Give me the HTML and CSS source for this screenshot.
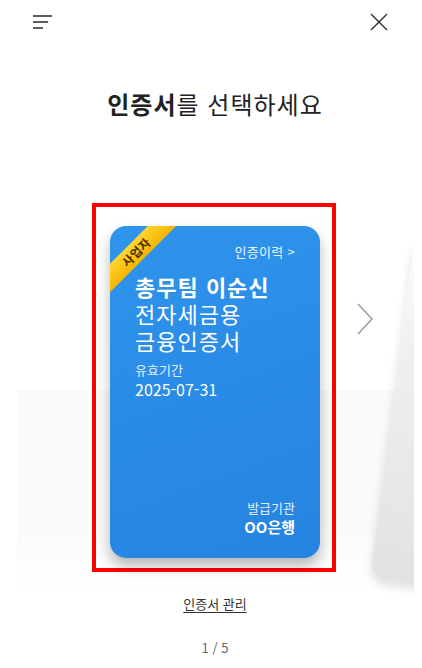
FILE: index.html
```html
<!DOCTYPE html>
<html lang="ko">
<head>
    <meta charset="UTF-8">
    <meta name="viewport" content="width=device-width, initial-scale=1.0">
    <title>인증서 선택</title>
    <link rel="stylesheet" href="styles.css">
</head>
<body>
    <div class="page">
        <header class="topbar">
            <button class="icon-btn" aria-label="메뉴">
                <svg width="22" height="16" viewBox="0 0 22 16" fill="none" stroke="#333" stroke-width="1.6">
                    <line x1="1" y1="2" x2="20" y2="2"></line>
                    <line x1="1" y1="8" x2="16" y2="8"></line>
                    <line x1="1" y1="14" x2="11" y2="14"></line>
                </svg>
            </button>
            <button class="icon-btn" aria-label="닫기">
                <svg width="18" height="18" viewBox="0 0 18 18" fill="none" stroke="#333" stroke-width="1.5">
                    <line x1="1" y1="1" x2="17" y2="17"></line>
                    <line x1="17" y1="1" x2="1" y2="17"></line>
                </svg>
            </button>
        </header>

        <h1 class="title"><strong>인증서</strong>를 선택하세요</h1>

        <section class="stage">
            <div class="stage-bg"></div>
            <div class="next-card"></div>

            <div class="slide">
                <div class="frame">
                    <div class="cert">
                        <div class="ribbon">사업자</div>
                        <div class="cert-top">
                            <a class="history">인증이력 &gt;</a>
                        </div>
                        <div class="cert-name">
                            <strong>총무팀 이순신</strong>
                            <span>전자세금용</span>
                            <span>금융인증서</span>
                        </div>
                        <div class="cert-date">
                            <span class="label">유효기간</span>
                            <span class="value">2025-07-31</span>
                        </div>
                        <div class="cert-issuer">
                            <span class="label">발급기관</span>
                            <span class="value">OO은행</span>
                        </div>
                    </div>
                </div>
                <button class="next-btn" aria-label="다음">
                    <svg width="18" height="32" viewBox="0 0 18 32" fill="none" stroke="#9a9a9a" stroke-width="1.5">
                        <polyline points="2 1 16 16 2 31"></polyline>
                    </svg>
                </button>
            </div>

            <div class="stage-footer">
                <a class="manage">인증서 관리</a>
                <p class="pager">1 / 5</p>
            </div>
        </section>
    </div>
</body>
</html>
```

FILE: styles.css
```css
* {
    margin: 0;
    padding: 0;
    box-sizing: border-box;
}

body {
    background-color: #fff;
    font-family: "Noto Sans CJK KR", "Noto Sans", sans-serif;
    color: #222;
}

.page {
    position: relative;
    width: 414px;
    height: 668px;
    overflow: hidden;
    background-color: #fff;
}

.topbar {
    display: flex;
    justify-content: space-between;
    align-items: center;
    padding: 12px 26px 0 32px;
    height: 32px;
}

.icon-btn {
    border: none;
    background: none;
    display: flex;
    cursor: pointer;
}

.title {
    margin-top: 56px;
    padding-left: 16px;
    text-align: center;
    font-size: 24px;
    font-weight: 400;
    line-height: 32px;
    letter-spacing: 1px;
    color: #222;
}

.title strong {
    font-weight: 700;
}

.stage {
    position: relative;
    margin-top: 83px;
    height: 465px;
}

.stage-bg {
    position: absolute;
    left: 17px;
    right: 0;
    top: 187px;
    height: 200px;
    background: linear-gradient(#fafafa, #fafafa 70%, #fff);
}

/* the next card peeking in from the right */
.next-card {
    position: absolute;
    left: 370px;
    top: 34px;
    width: 210px;
    height: 340px;
    border-radius: 16px;
    background: linear-gradient(to bottom, #fff 0%, #f0f0f0 30%, #e2e2e2 100%);
    box-shadow: 0 6px 10px rgba(0, 0, 0, 0.12);
    transform: rotate(7.5deg);
    transform-origin: left bottom;
}

.slide {
    position: relative;
    display: flex;
    align-items: flex-start;
    padding-left: 92px;
}

.frame {
    width: 244px;
    border: 4px solid #ff0000;
    padding: 19px 12px 10px 14px;
}

.cert {
    position: relative;
    width: 210px;
    height: 332px;
    border-radius: 16px;
    overflow: hidden;
    background: linear-gradient(160deg, #2f94ec 0%, #2a8be6 50%, #2584e0 100%);
    box-shadow: 0 8px 14px rgba(0, 0, 0, 0.28);
    color: #fff;
    display: flex;
    flex-direction: column;
    padding: 17px 25px 21px 25px;
}

.ribbon {
    position: absolute;
    left: -24px;
    top: 16px;
    width: 100px;
    height: 20px;
    transform: rotate(-45deg);
    background: linear-gradient(#ffd630, #f6b400);
    color: #4a2e00;
    font-size: 12px;
    font-weight: 700;
    line-height: 20px;
    text-align: center;
    letter-spacing: 0.5px;
}

.cert-top {
    display: flex;
    justify-content: flex-end;
}

.history {
    font-size: 13px;
    line-height: 18px;
    color: #eaf4ff;
    letter-spacing: 0.3px;
}

.cert-name {
    display: flex;
    flex-direction: column;
    margin-top: 12px;
    font-size: 22px;
    line-height: 27px;
    letter-spacing: 1px;
}

.cert-name strong {
    font-weight: 700;
}

.cert-date {
    display: flex;
    flex-direction: column;
    margin-top: 7px;
}

.label {
    font-size: 13px;
    line-height: 18px;
    color: #e3f0ff;
}

.value {
    font-size: 16px;
    line-height: 20px;
}

.cert-issuer {
    margin-top: auto;
    display: flex;
    flex-direction: column;
    align-items: flex-end;
}

.cert-issuer .value {
    font-size: 15px;
    font-weight: 700;
}

.next-btn {
    border: none;
    background: none;
    margin-top: 100px;
    margin-left: 20px;
    display: flex;
}

.stage-footer {
    display: flex;
    flex-direction: column;
    align-items: center;
    margin-top: 23px;
    padding-left: 16px;
}

.manage {
    font-size: 13px;
    line-height: 18px;
    color: #333;
    text-decoration: underline;
    text-underline-offset: 3px;
}

.pager {
    margin-top: 25px;
    font-size: 13px;
    color: #666;
}
```
